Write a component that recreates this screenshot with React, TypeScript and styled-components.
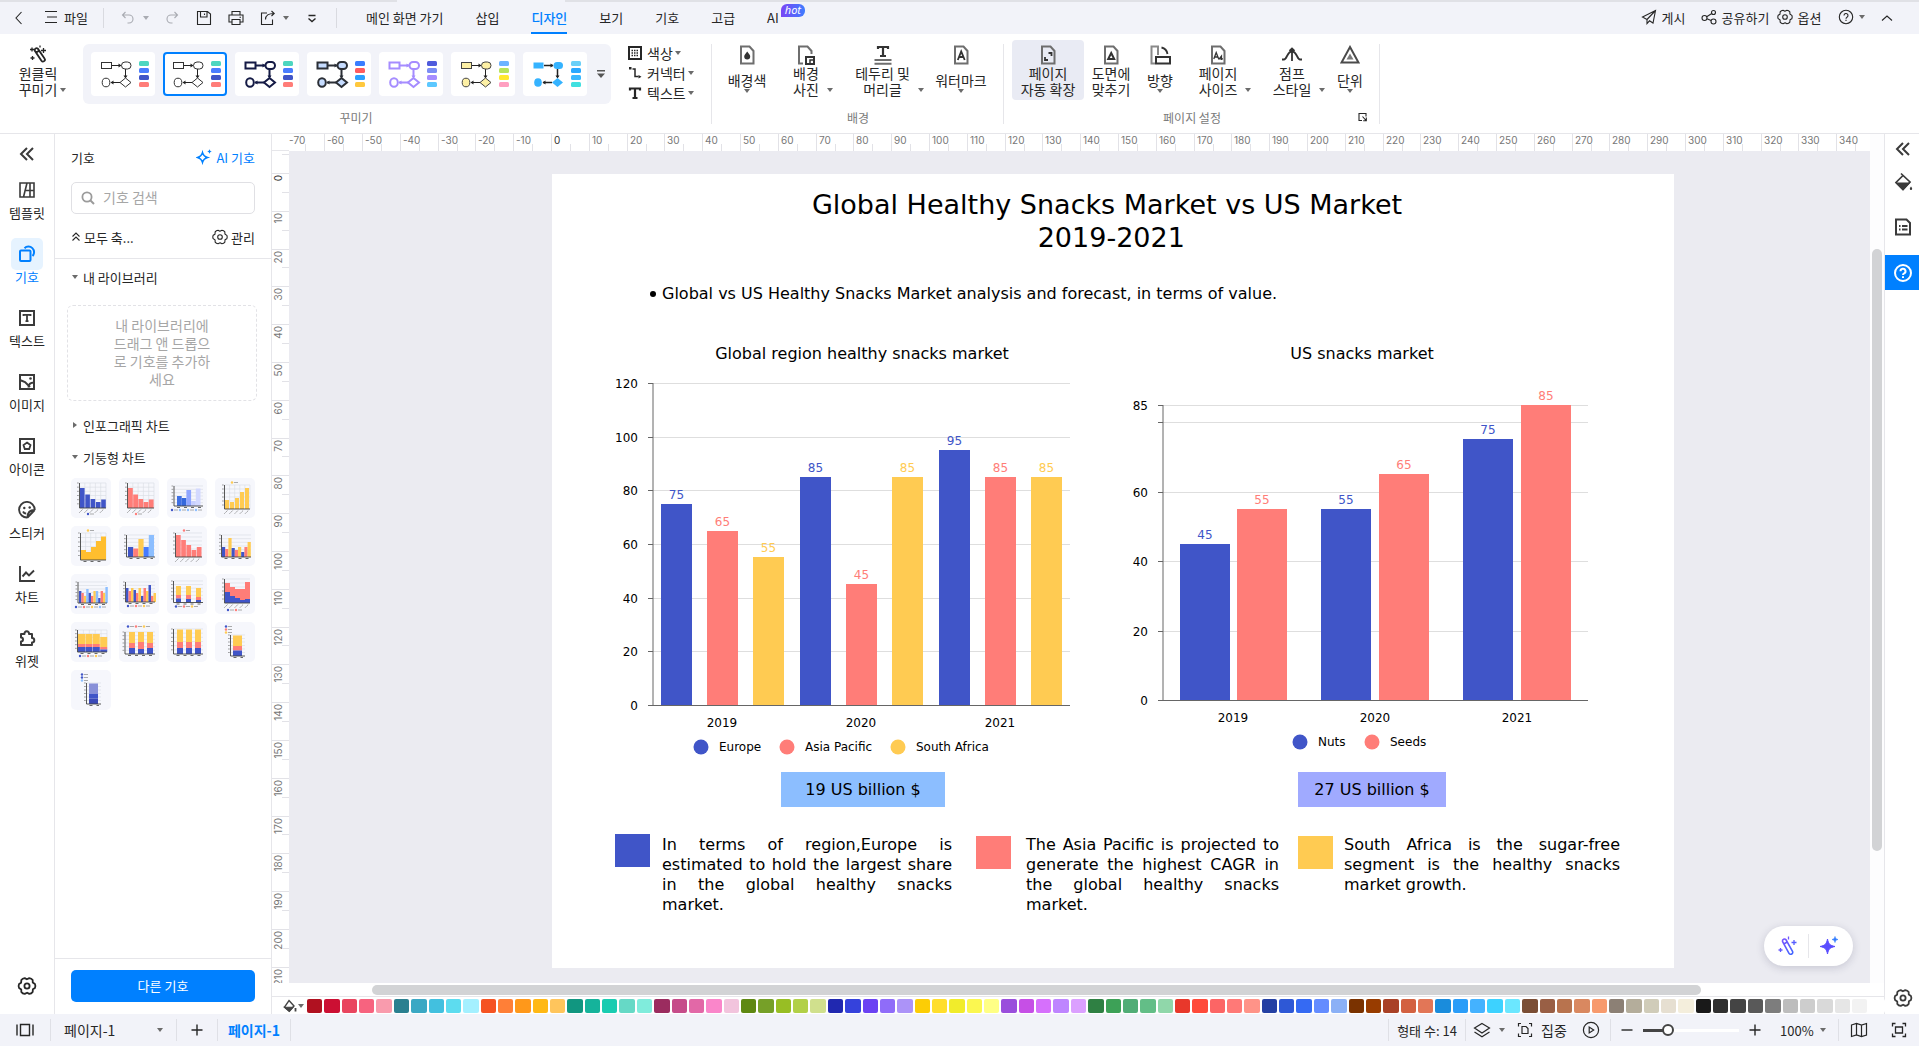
import React, { useEffect, useState } from "react";
import styled, { createGlobalStyle, css } from "styled-components";

const UI = `"Noto Sans CJK KR", "Noto Sans", sans-serif`;
const DOC = `Verdana, "DejaVu Sans", sans-serif`;
const BLUE = "#0080ff";
const LINE = "#e6e6ea";
const INK = "#262626";

const GlobalStyle = createGlobalStyle`
  *, *::before, *::after { box-sizing: border-box; }
  html, body { margin: 0; padding: 0; }
  body { font-family: ${UI}; font-size: 13px; color: ${INK}; background: #fff; overflow: hidden; }
  button, input, select { font: inherit; color: inherit; background: none; border: 0; padding: 0; margin: 0; }
  button { cursor: pointer; }
  svg { display: block; flex: none; }
  h1, h2, p, ul { margin: 0; padding: 0; font-weight: 400; }
`;

/* ---------- icons ---------- */

const gearPath = (cx: number, cy: number, r: number) => {
  const pts: string[] = [];
  for (let i = 0; i < 6; i++) {
    const a = (i * Math.PI) / 3 - Math.PI / 2;
    const mid = a + Math.PI / 6;
    const p = (ang: number, rad: number) =>
      `${(cx + rad * Math.cos(ang)).toFixed(2)} ${(cy + rad * Math.sin(ang)).toFixed(2)}`;
    pts.push(`${i ? "L" : "M"}${p(a - 0.02, r * 0.82)}`);
    pts.push(`L${p(mid - 0.24, r)}`);
    pts.push(`Q${p(mid, r * 1.08)} ${p(mid + 0.24, r)}`);
  }
  return pts.join("") + "Z";
};

const DocOutline = () => <path d="M2 1.5h8.5L14.5 6v12.5H2z" stroke="#6e6e6e" strokeWidth="2" />;

const glyphs: Record<string, [number, number, React.ReactNode]> = {
  back: [16, 16, <path d="M10.500 2 5 8l5.500 6" />],
  menu: [14, 14, <path d="M1 1.500h12M3 7h10M1 12.500h12" />],
  undo: [16, 16, <path d="M5.500 2 2.500 5l3 3M2.500 5H9a4 4 0 0 1 4 4v0a4 4 0 0 1-4 4H7.500" />],
  redo: [16, 16, <path d="M10.500 2l3 3-3 3M13.500 5H7a4 4 0 0 0-4 4v0a4 4 0 0 0 4 4h1.500" />],
  save: [16, 16, <path d="M1.500 1.500h10L14.500 4v10.500h-13zM4.500 1.500v5.500h6.500V1.500M8.500 3.500v1.500" />],
  print: [16, 16, <path d="M4 5V1.500h8V5M4 12H1V5h14v7h-3M4 9.500h8v5H4zM11.500 7.200h1.500" />],
  share: [16, 16, <path d="M7 3H1.500v11.500h11V9.500M5.500 9.500c0-4 3-6 8.500-6M11.500 1l2.700 2.500-2.700 2.500" />],
  custom: [12, 12, <path d="M2.500 3.500h7M2.500 6.500 6 9.500l3.500-3" strokeWidth="1.400" />],
  send: [16, 16, <path d="M14.500 1.500 1.500 8l4.500 2.500v4l2.500-2.700 3.500 2.200zM14.500 1.500 6 10.500" />],
  nodes: [16, 16, <><circle cx="3.500" cy="9" r="2.500" /><circle cx="12.500" cy="3.500" r="2" /><circle cx="12.500" cy="12.500" r="2.500" /><path d="M5.700 7.700 10.800 4.500M6 9.700l4 1.800" /></>],
  gear: [16, 16, <><path d={gearPath(8, 8, 7)} strokeLinejoin="round" /><circle cx="8" cy="8" r="2.300" /></>],
  gearBold: [20, 20, <><path d={gearPath(10, 10, 8.200)} strokeWidth="1.800" strokeLinejoin="round" /><circle cx="10" cy="10" r="2.600" strokeWidth="1.800" /></>],
  help: [16, 16, <><circle cx="8" cy="8" r="6.700" /><path d="M6 6.500a2 2 0 1 1 3 1.700c-.8.5-1 .8-1 1.500M8 10.800V12" /></>],
  helpBold: [20, 20, <><circle cx="10" cy="10" r="8" strokeWidth="2" /><path d="M7.500 8.200a2.500 2.500 0 1 1 3.700 2.200c-.9.5-1.200.9-1.200 1.600M10 13.200v1.800" strokeWidth="2" /></>],
  up: [14, 14, <path d="M2 9.500 7 5l5 4.500" />],
  collapse: [16, 16, <path d="M8 2 2 8l6 6M14 2 8 8l6 6" strokeWidth="2" />],
  wand: [20, 20, <><path d="M7.200 5.200a1.900 1.900 0 0 1 3.300-1.500l5.600 10.400a1.900 1.900 0 0 1-3.300 2zM8.200 7.500l2.800-1.500" strokeWidth="1.800" transform="rotate(-6 10 10)" /><path d="M4 2.500v4M2 4.500h4M15.500 3v5M13 5.500h5M4.500 11v4M2.500 13h4M12 .5v2" strokeWidth="1.300" /></>],
  colors: [14, 14, <><rect x="1" y="1" width="12" height="12" strokeWidth="2" /><path d="M3.500 4.500h7M3.500 7h7M3.500 9.500h7" strokeWidth="1.500" strokeDasharray="1.500 1" /></>],
  connector: [14, 14, <><path d="M4.500 3H7v7.500h3.500" strokeWidth="1.500" /><path d="M1 1h2.500v2.500H1zM10.500 9l3 1.700-3 1.800z" fill="currentColor" stroke="none" /></>],
  text: [14, 14, <path d="M2 4.500V2.500h10v2M7 2.500v9.500M4.500 12h5" strokeWidth="2.200" />],
  docDrop: [16, 20, <><DocOutline /><path d="M8.200 6.500c2 2.500 3 3.500 3 5a3 3 0 0 1-6 0c0-1.500 1-2.500 3-5z" fill="#333" stroke="none" /></>],
  docPhoto: [18, 20, <><path d="M6 18.500H2v-17h8.500L14.500 6v3" stroke="#6e6e6e" strokeWidth="2" /><path d="M9 12h8v7H9z" strokeWidth="2" stroke="#333" /><path d="M13 19v-4h4" stroke="#333" strokeWidth="1.500" /></>],
  header: [20, 20, <><path d="M5 4V2h10v2M10 2v9M7 11h6" stroke="#333" strokeWidth="2.200" /><path d="M1.500 15h17M1.500 18.800h17" stroke="#6e6e6e" strokeWidth="2" /></>],
  docA: [16, 20, <><DocOutline /><path d="M4.800 15 8.200 6.500 11.700 15M6 12h4.500" stroke="#333" strokeWidth="1.800" /></>],
  docExpand: [16, 20, <><DocOutline /><path d="M8.500 8h3v3M8 15H5v-3" stroke="#333" strokeWidth="1.800" /></>],
  docFit: [16, 20, <><DocOutline /><path d="M8.200 8 11.200 14H5.200z" stroke="#333" strokeWidth="2" /></>],
  rotate: [22, 20, <><path d="M6 18.500H2.500v-17H9V10" stroke="#8a8a8a" strokeWidth="2" /><path d="M7 12h14v6.500H7z" stroke="#333" strokeWidth="2" /><path d="M12.500 2.500c3.500.8 5.500 3 6 6.500" stroke="#333" strokeWidth="1.800" /></>],
  docA4: [16, 20, <><DocOutline /><path d="M3.800 14 6.200 7.500 8.700 14M4.700 12h3.200" stroke="#333" strokeWidth="1.300" /><path d="M11.500 15V11l-2.300 2.800H13" stroke="#333" strokeWidth="1.200" /></>],
  jump: [20, 20, <path d="M0 14.500h2c3 0 3-8 8-8s5 8 8 8h2M10 3v13M7.500 6 10 3.500 12.500 6" stroke="#333" strokeWidth="1.800" />],
  unit: [20, 20, <><path d="M10 2 18.500 17.500h-17z" stroke="#4a4a4a" strokeWidth="2" /><path d="M10 8.500l3.500 6h-7z" fill="#7a7a7a" stroke="none" /></>],
  launch: [10, 10, <path d="M4 8.500H1v-7h7v3M4.500 4.500 8 8.500M8.300 5.500v3.200H5.200" />],
  template: [18, 18, <path d="M2 2h14v14H2zM9 2 5.500 16M8 9.500h8M12 2v14" strokeWidth="1.600" />],
  symbol: [18, 18, <><rect x="2" y="5.500" width="10.500" height="10.500" rx="1" strokeWidth="2" /><path d="M6.500 3.300A5 5 0 1 1 14.500 11" strokeWidth="2" /></>],
  textBox: [18, 18, <><path d="M2 2h14v14H2z" strokeWidth="2" /><path d="M5.500 7V5.800h7V7M9 5.800V12M7.500 12.200h3" strokeWidth="1.800" /></>],
  image: [18, 18, <><path d="M2 2h14v14H2zM2 7l5 2 5 5M16 9.500c-4 0-5.500 2-5.500 5" strokeWidth="2" /><circle cx="12.500" cy="5.500" r="1.300" fill="currentColor" stroke="none" /></>],
  iconBox: [18, 18, <><path d="M2 2h14v14H2z" strokeWidth="2" /><path d="M9 5.500 12.500 8l-1.300 4H6.800L5.500 8z" strokeWidth="1.800" /></>],
  sticker: [18, 18, <><path d="M9.500 16.500A7.800 7.800 0 1 1 16.700 9M9.500 16.500c0-4 2-7.500 7.200-7.500M9.500 16.500 16.700 9M5 10.500c.7 1.300 1.700 2 3.200 2" strokeWidth="1.900" /><circle cx="6.300" cy="7" r="1.200" fill="currentColor" stroke="none" /><circle cx="11.700" cy="6.500" r="1.200" fill="currentColor" stroke="none" /></>],
  chart: [18, 18, <path d="M2 1v15h15M4.500 11.500 8 7.500l3 3 5-5" strokeWidth="1.900" />],
  puzzle: [18, 18, <path d="M3 5h3.500a2.300 2.300 0 1 1 4.500 0H14v4a2 2 0 1 1 0 4.500V16H3v-3.500a2 2 0 1 0 0-4z" strokeWidth="2" strokeLinejoin="round" />],
  sparkle: [16, 16, <><path d="M6.500 3.500c.8 3 2 4.200 5 5-3 .8-4.200 2-5 5-.8-3-2-4.200-5-5 3-.8 4.200-2 5-5z" strokeWidth="1.400" /><path d="M13.500 0c.3 1.600.9 2.200 2.500 2.500-1.600.3-2.200.9-2.500 2.500-.3-1.600-.9-2.200-2.500-2.500 1.600-.3 2.200-.9 2.500-2.500z" fill="currentColor" stroke="none" /></>],
  search: [14, 14, <><circle cx="6" cy="6" r="4.600" strokeWidth="1.800" /><path d="M9.500 9.500 13 13" strokeWidth="2" /></>],
  dblUp: [10, 12, <path d="M1.500 5.500 5 2l3.500 3.500M1.500 9.500 5 6l3.500 3.500" />],
  bucket: [20, 20, <><path d="M8 1.500 17 10 10 17.500 3 10.500 9.500 4" strokeWidth="1.700" /><path d="M2 10.500h15.500L10 18.500z" fill="currentColor" stroke="none" /><path d="M18 14.500c1 1.300 1.200 1.800 1.200 2.300a1.200 1.200 0 0 1-2.400 0c0-.5.300-1 1.200-2.300z" fill="currentColor" stroke="none" /></>],
  fillSmall: [14, 14, <><path d="M6 1.500 11 7l-4.700 5L1.500 8z" strokeWidth="1.400" /><path d="M1.500 8.300H10L6.300 12.500z" fill="currentColor" /><path d="M12.500 9v3.500" strokeWidth="1.800" /></>],
  list: [18, 18, <><path d="M2 1.500h10.500L16 5v11.500H2z" strokeWidth="2" /><path d="M5 8h1.500M8 8h5.500M5 11.500h1.500M8 11.500h5.500" strokeWidth="1.800" /></>],
  pages: [18, 14, <path d="M1 1.500v11M17 1.500v11M4.500 1.500h9v11h-9z" strokeWidth="1.400" />],
  plus: [14, 14, <path d="M7 1.500v11M1.500 7h11" strokeWidth="1.400" />],
  minus: [14, 14, <path d="M1.500 7h11" strokeWidth="1.400" />],
  layers: [18, 16, <path d="M9 1.500 16.500 6 9 11 1.500 6zM1.500 10 9 14.800 16.500 10" strokeWidth="1.200" />],
  focus: [16, 16, <path d="M4 1.500H1.500v3M12 1.500h2.500v3M4 14.500H1.500v-3M12 14.500h2.500v-3M5 4.500h4l2 2v5H5z" strokeWidth="1.200" />],
  play: [18, 18, <><circle cx="9" cy="9" r="7.600" strokeWidth="1.200" /><path d="M7.200 6v6l4.500-3z" strokeWidth="1.200" /></>],
  map: [18, 16, <path d="M1.500 3 6.500 1.500l5 1.500 5-1.500V13l-5 1.500-5-1.500-5 1.500zM6.500 1.500V13M11.500 3v11.500" strokeWidth="1.200" />],
  fit: [16, 16, <path d="M4.500 1.500h-3v3M11.500 1.500h3v3M4.500 14.500h-3v-3M11.500 14.500h3v-3M4.500 5h7v6h-7z" strokeWidth="1.300" />],
};

const Icon = ({ name }: { name: string }) => {
  const [w, h, body] = glyphs[name];
  return (
    <svg width={w} height={h} viewBox={`0 0 ${w} ${h}`} fill="none" stroke="currentColor" strokeWidth="1.1" aria-hidden="true">
      {body}
    </svg>
  );
};

const Caret = ({ dir = "down", color = "#6b6b6b" }: { dir?: "down" | "right"; color?: string }) => (
  <svg width="6" height="6" viewBox="0 0 6 6" fill={color} aria-hidden="true">
    <path d={dir === "down" ? "M0 1h6L3 5z" : "M1 0v6l4-3z"} />
  </svg>
);

/* ---------- frame ---------- */

const Frame = styled.div`
  height: 100vh;
  display: flex;
  flex-direction: column;
`;

const WindowEdge = styled.div`
  height: 2px;
  flex: none;
  background: linear-gradient(90deg, #e0e1e6 397px, #f2f3f9 397px, #f2f3f9 565px, #e0e1e6 565px);
`;

const MenuBar = styled.header`
  height: 32px;
  flex: none;
  display: flex;
  align-items: center;
  padding: 0 26px 0 7px;
  background: #f2f3f9;
`;

const IconButton = styled.button<{ $w?: number; $dim?: boolean }>`
  width: ${(p) => p.$w ?? 24}px;
  height: 24px;
  display: inline-flex;
  align-items: center;
  justify-content: center;
  color: ${(p) => (p.$dim ? "#a9abb2" : INK)};
`;

const LabelButton = styled.button<{ $w?: number }>`
  ${(p) => p.$w && css`width: ${p.$w}px;`}
  display: inline-flex;
  align-items: center;
  justify-content: center;
  gap: 5px;
  height: 24px;
  padding-bottom: 2px;
  white-space: nowrap;
`;

const FileButton = styled(LabelButton)`
  margin: 0 15px 0 13px;
  gap: 6px;
`;

const Separator = styled.span`
  width: 1px;
  height: 20px;
  background: #d9dae0;
`;

const QuickTools = styled.div`
  display: flex;
  gap: 8px;
  padding: 0 12px;
`;

const Split = styled.div`
  display: flex;
`;

const Tabs = styled.nav`
  display: flex;
  gap: 32px;
  padding-left: 29px;
  flex: 1;
`;

const Tab = styled.button<{ $active?: boolean }>`
  position: relative;
  height: 31px;
  padding-top: 1px;
  border-bottom: 2px solid ${(p) => (p.$active ? BLUE : "transparent")};
  color: ${(p) => (p.$active ? BLUE : INK)};
  font-weight: ${(p) => (p.$active ? 500 : 400)};
  white-space: nowrap;
`;

const HotBadge = styled.span`
  position: absolute;
  left: 100%;
  top: 1px;
  margin-left: 2px;
  padding: 0 4px;
  height: 13px;
  line-height: 12px;
  border-radius: 6px 6px 6px 0;
  background: linear-gradient(90deg, #7a45f5, #3f7dff);
  color: #fff;
  font-family: "Noto Sans", sans-serif;
  font-size: 11px;
  font-style: italic;
`;

/* ---------- ribbon ---------- */

const Ribbon = styled.section`
  height: 100px;
  flex: none;
  display: flex;
  border-bottom: 1px solid ${LINE};
  background: #fff;
`;

const Group = styled.div<{ $w: number; $pad: number }>`
  width: ${(p) => p.$w}px;
  padding: 6px 0 0 ${(p) => p.$pad}px;
  display: flex;
  flex-direction: column;
  background: linear-gradient(${LINE}, ${LINE}) right 0 top 10px / 1px 80px no-repeat;
`;

const GroupRow = styled.div`
  display: flex;
  height: 60px;
  flex: none;
`;

const GroupLabel = styled.div<{ $pull: number }>`
  display: flex;
  align-items: center;
  flex: none;
  height: 33px;
  padding-top: 1px;
  margin-left: -${(p) => p.$pull}px;
  font-size: 12px;
  color: #7a7a7a;
  & > span { flex: 1; text-align: center; }
`;

const Launcher = styled(IconButton)`
  width: 16px;
  margin: 0 9px 0 -25px;
`;

const Tool = styled.button<{ $w: number; $active?: boolean }>`
  width: ${(p) => p.$w}px;
  height: 60px;
  padding-top: 5px;
  display: flex;
  justify-content: center;
  align-items: flex-start;
  border-radius: 4px;
  font-size: 14px;
  line-height: 16px;
  white-space: nowrap;
  background: ${(p) => (p.$active ? "#e9ebf4" : "none")};
`;

const ToolBody = styled.span<{ $single?: boolean }>`
  display: flex;
  flex-direction: column;
  align-items: center;
  padding: 0 4px;
  & > svg:first-child { height: 20px; margin-bottom: ${(p) => (p.$single ? 7 : 0)}px; }
`;

const SideCaret = styled.span<{ $tight?: boolean }>`
  align-self: flex-start;
  padding-top: 42px;
  margin-left: ${(p) => (p.$tight ? -1 : 4)}px;
`;

const Gallery = styled.div`
  display: flex;
  align-items: center;
  height: 60px;
  margin: 4px 17px 0 9px;
  padding: 8px;
  gap: 8px;
  border-radius: 6px;
  background: #f2f3f9;
`;

const ThemeCard = styled.button<{ $selected?: boolean }>`
  width: 64px;
  height: 44px;
  border-radius: 4px;
  background: #fff;
  box-shadow: ${(p) => (p.$selected ? `inset 0 0 0 2px ${BLUE}` : "none")};
`;

const GalleryMore = styled(IconButton)`
  width: 16px;
  margin: 0 -6px 0 -2px;
`;

const OptionList = styled.div`
  display: flex;
  flex-direction: column;
  padding-top: 3px;
`;

const OptionButton = styled.button`
  display: flex;
  align-items: center;
  gap: 5px;
  height: 20px;
  font-size: 14px;
  line-height: 20px;
  white-space: nowrap;
  & > svg:last-child { margin-left: -3px; }
`;

interface Theme { stroke: string; fill: string; sw: number; line: string; colors: string[] }
const base = ["#4dd6c0", "#4a7dff", "#4055c8", "#ff7d78"];
const themes: Theme[] = [
  { stroke: "#333", fill: "#fff", sw: 1, line: "#222", colors: base },
  { stroke: "#333", fill: "#fff", sw: 1, line: "#222", colors: base },
  { stroke: "#141a45", fill: "#fff", sw: 2, line: "#141a45", colors: base },
  { stroke: "#2b2f36", fill: "#c6dcff", sw: 2, line: "#2b2f36", colors: ["#3a7dff", "#ff5c60", "#2ba0ff", "#ffc83d"] },
  { stroke: "#a58cff", fill: "#fff", sw: 2, line: "#a58cff", colors: ["#4f5bdc", "#7b8df5", "#a58cff", "#5cc8ff"] },
  { stroke: "#444", fill: "#fdf0a5", sw: 1, line: "#222", colors: ["#6db3ff", "#b8e35c", "#ffe830", "#ff9fc0"] },
  { stroke: "#35b3ff", fill: "#35b3ff", sw: 0, line: "#222", colors: ["#6bd0f8", "#2ba8ff", "#3cb8ff", "#40e0e0"] },
];

const ThemePreview = ({ t }: { t: Theme }) => (
  <svg width="64" height="44" viewBox="0 0 64 44" aria-hidden="true">
    <g stroke={t.line} strokeWidth={t.sw || 1.500} fill={t.line}>
      <path d="M21 13.500h9M34.500 17v8M29 30.500h-9" fill="none" />
      <path d="M27.500 11.500v4l3-2zM32.500 23.500h4l-2 3zM22.500 28.500v4l-3-2z" stroke="none" />
    </g>
    <g stroke={t.stroke} strokeWidth={t.sw} fill={t.fill}>
      <rect x="10.500" y="10.500" width="10" height="6" />
      <rect x="30.500" y="10" width="9.500" height="7" rx="3.500" />
      <path d="M34.500 26l5.500 4.500-5.500 4.500-5.500-4.500z" />
      <ellipse cx="15" cy="30.500" rx="3.800" ry="4.300" />
    </g>
    {t.colors.map((c, i) => (
      <rect key={i} x="48" y={9 + i * 7} width="10" height="5" rx="1.500" fill={c} />
    ))}
  </svg>
);

interface ToolSpec { icon: string; lines: string[]; w: number; caret?: "side" | "below"; active?: boolean }
const backgroundTools: ToolSpec[] = [
  { icon: "docDrop", lines: ["배경색"], w: 60, caret: "below" },
  { icon: "docPhoto", lines: ["배경", "사진"], w: 68, caret: "side" },
  { icon: "header", lines: ["테두리 및", "머리글"], w: 85, caret: "side" },
  { icon: "docA", lines: ["워터마크"], w: 62, caret: "below" },
];
const pageTools: ToolSpec[] = [
  { icon: "docExpand", lines: ["페이지", "자동 확장"], w: 72, active: true },
  { icon: "docFit", lines: ["도면에", "맞추기"], w: 54 },
  { icon: "rotate", lines: ["방향"], w: 44, caret: "below" },
  { icon: "docA4", lines: ["페이지", "사이즈"], w: 82, caret: "side" },
  { icon: "jump", lines: ["점프", "스타일"], w: 66, caret: "side" },
  { icon: "unit", lines: ["단위"], w: 40, caret: "below" },
];

const ToolButton = ({ spec, tight }: { spec: ToolSpec; tight?: boolean }) => (
  <Tool $w={spec.w} $active={spec.active}>
    <ToolBody $single={spec.lines.length === 1}>
      <Icon name={spec.icon} />
      {spec.lines.map((l) => <span key={l}>{l}</span>)}
      {spec.caret === "below" && <Caret />}
    </ToolBody>
    {spec.caret === "side" && <SideCaret $tight={tight}><Caret /></SideCaret>}
  </Tool>
);

/* ---------- left rail and panel ---------- */

const Body = styled.div`
  flex: 1;
  min-height: 0;
  display: flex;
`;

const Rail = styled.nav`
  width: 55px;
  flex: none;
  display: flex;
  flex-direction: column;
  align-items: center;
  padding: 8px 0 16px;
  border-right: 1px solid ${LINE};
  color: #3b3b3b;
  & > button:last-child { margin-top: auto; }
`;

const RailItem = styled.button<{ $active?: boolean }>`
  height: 64px;
  display: flex;
  flex-direction: column;
  align-items: center;
  line-height: 14px;
  color: ${(p) => (p.$active ? BLUE : INK)};
  & > span:first-child {
    width: 32px;
    height: 32px;
    display: grid;
    place-items: center;
    border-radius: 5px;
    color: ${(p) => (p.$active ? BLUE : "#3b3b3b")};
    background: ${(p) => (p.$active ? "#e6f3ff" : "none")};
  }
`;

const RailToggle = styled(IconButton)`
  margin-bottom: 8px;
  color: #3b3b3b;
`;

const Panel = styled.aside`
  width: 216px;
  flex: none;
  display: flex;
  flex-direction: column;
`;

const PanelHead = styled.div`
  padding: 13px 16px 10px;
  border-bottom: 1px solid ${LINE};
`;

const PanelRow = styled.div`
  display: flex;
  justify-content: space-between;
  align-items: center;
  height: 20px;
`;

const AiLink = styled.button`
  display: flex;
  align-items: center;
  gap: 4px;
  color: ${BLUE};
`;

const SearchBox = styled.label`
  display: flex;
  align-items: center;
  gap: 8px;
  height: 32px;
  margin: 15px 0 14px;
  padding: 0 9px;
  border: 1px solid #e0e0e4;
  border-radius: 5px;
  color: #9b9b9b;
`;

const SearchInput = styled.input`
  flex: 1;
  min-width: 0;
  height: 28px;
  padding-bottom: 2px;
  font-size: 14px;
  outline: none;
  &::placeholder { color: #a6a6a6; opacity: 1; }
`;

const RowButton = styled.button`
  display: flex;
  align-items: center;
  gap: 3px;
  padding-bottom: 2px;
`;

const PanelBody = styled.div`
  flex: 1;
  min-height: 0;
  padding: 2px 14px 0 12px;
  display: flex;
  flex-direction: column;
`;

const SectionToggle = styled.button`
  display: flex;
  align-items: center;
  gap: 5px;
  height: 32px;
  padding: 0 5px;
  text-align: left;
`;

const DropZone = styled.p`
  margin: 12px 0 8px;
  height: 96px;
  display: flex;
  align-items: center;
  border: 1px dashed #e2e2e6;
  border-radius: 6px;
  padding: 0 44px 2px;
  font-size: 14px;
  line-height: 18px;
  color: #a6a6a6;
  text-align: center;
  word-break: break-all;
`;

const TileGrid = styled.div`
  display: grid;
  grid-template-columns: repeat(4, 40px);
  gap: 8px;
  padding: 5px 4px;
`;

const Tile = styled.button`
  height: 40px;
  border-radius: 5px;
  background: #f6f7fc;
`;

const PanelFoot = styled.div`
  padding: 11px 16px 12px;
  border-top: 1px solid ${LINE};
`;

const PrimaryButton = styled.button`
  width: 100%;
  height: 32px;
  padding-bottom: 2px;
  border-radius: 5px;
  background: ${BLUE};
  color: #fff;
`;

const B = "#4055c8", R = "#ff7d78", Y = "#ffcb52", L = "#8cbeff";
/* Each bar: left edge, width, then [top, colour] pairs stacked downwards. */
type Bar = [number, number, ...[number, string][]];
interface Mini { x: number; top: number; bottom: number; right: number; bars: Bar[]; grid?: boolean; legend?: "top" | "bottom" | "stack"; slant?: boolean; keys: string[] }

const run = (x: number, w: number, gap: number, tops: number[], colors: string[]): Bar[] =>
  tops.map((t, i) => [x + i * (w + gap), w, [t, colors[i % colors.length]]] as Bar);
const stacks = (x: number, w: number, gap: number, rows: [number, string][][]): Bar[] =>
  rows.map((r, i) => [x + i * (w + gap), w, ...r] as Bar);

const minis: Mini[] = [
  { x: 8.500, top: 5, bottom: 30, right: 35, grid: true, slant: true, legend: "bottom", keys: [B], bars: run(9, 4.600, 0.700, [10, 16.500, 21, 24, 21.500], [B]) },
  { x: 8.500, top: 5, bottom: 30, right: 35, grid: true, slant: true, legend: "bottom", keys: [R], bars: run(9, 4.800, 0.400, [10, 16.500, 21, 24, 21.500], [R]) },
  { x: 7, top: 8, bottom: 28, right: 36, legend: "bottom", keys: [B, L, L, L], bars: run(10, 4.700, 0, [18, 20, 12, 23, 10.500], ["#3f70e4", "#3568dc", "#8fa5ff", "#c8d0ff", "#d3d9ff"]) },
  { x: 9.500, top: 7, bottom: 31, right: 35, grid: true, slant: true, legend: "top", keys: [Y], bars: run(10, 4, 1, [22, 24, 20, 14, 10], [Y]) },
  { x: 9.500, top: 7, bottom: 34, right: 35, grid: true, legend: "top", keys: [Y], bars: run(10, 5, 0, [24, 26, 21, 15, 10.500], ["#ffbe2e"]) },
  { x: 7.500, top: 9, bottom: 31, right: 36, keys: [], bars: run(9, 5.200, 0, [21, 22.500, 13, 21, 9], [B, R, Y, "#457bff", L]) },
  { x: 8.500, top: 7, bottom: 31, right: 35, slant: true, legend: "top", keys: [R], bars: run(9, 4.700, 0.500, [9, 14, 19, 24, 21], [R]) },
  { x: 6.500, top: 9, bottom: 31, right: 36, keys: [], bars: run(7, 3.200, 0, [21, 23, 12, 22, 24, 21, 26, 21, 16], [B, R, Y]) },
  { x: 7, top: 8, bottom: 29, right: 36, legend: "bottom", keys: [B, R, Y, L], bars: run(8, 2.400, 0, [17, 19, 22, 15, 19, 22, 17, 17, 24, 17, 19, 13], [B, R, Y, L]) },
  { x: 6.500, top: 8, bottom: 28, right: 36, legend: "bottom", keys: [B, R, Y], bars: run(7, 2.500, 0, [14, 17, 14, 16, 19, 14, 22, 14, 17, 11, 22, 19], [B, R, Y]) },
  { x: 6.500, top: 7, bottom: 28.500, right: 36, legend: "bottom", keys: [B, R, Y], bars: stacks(9, 5, 5, [[[12, Y], [21, R], [24.500, B]], [[12, Y], [21, R], [25, B]], [[14, Y], [23, R], [26, B]]]) },
  { x: 9.500, top: 5, bottom: 29, right: 35, slant: true, legend: "bottom", keys: [B, R], bars: stacks(10, 5, 0, [[[9, R], [18, B]], [[13, R], [22, B]], [[15, R], [24, B]], [[15, R], [26, B]], [[8, R], [25, B]]]) },
  { x: 6.500, top: 8, bottom: 30, right: 36, grid: true, legend: "bottom", keys: [B, R, Y], bars: stacks(7, 7, 0.400, [[[12, Y], [22, R], [25, B]], [[12, Y], [22, R], [25, B]], [[12, Y], [22, R], [25, B]], [[15, Y], [25, R], [27.500, B]]]) },
  { x: 6, top: 10, bottom: 32, right: 36, legend: "top", keys: [B, R, Y], bars: stacks(10, 6, 3, [[[10, Y], [21, R], [26, B]], [[10, Y], [20, R], [27, B]], [[10, Y], [21, R], [26, B]]]) },
  { x: 6.500, top: 7, bottom: 32, right: 36, keys: [], bars: stacks(10, 6, 3, [[[7.500, Y], [20, R], [26, B]], [[7.500, Y], [20, R], [26, B]], [[7.500, Y], [20, R], [26, B]]]) },
  { x: 15.500, top: 13, bottom: 34, right: 30, legend: "stack", keys: [B, R, Y], bars: stacks(18, 9, 0, [[[13.500, Y], [24, R], [28.500, B]]]) },
  { x: 15.500, top: 13, bottom: 34, right: 30, legend: "stack", keys: [B, B, L], bars: stacks(18, 9, 0, [[[13.500, "#8890d8"], [24, B], [28.500, "#3a49b8"]]]) },
];

const MiniChart = ({ m }: { m: Mini }) => {
  const step = (m.bottom - m.top) / 6;
  const keyY = (i: number) => {
    if (m.legend === "stack") return 4.500 + i * 3;
    if (m.legend === "top") return 4.500;
    return m.slant ? 36 : m.bottom + 4;
  };
  return (
    <svg width="40" height="40" viewBox="0 0 40 40" aria-hidden="true">
      {[0, 1, 2, 3, 4, 5].map((i) => (
        <g key={i}>
          <path d={`M${m.x} ${m.top + i * step}H${m.right}`} stroke="#d9dbe2" strokeWidth="0.6" />
          <path d={`M${m.x - 2.500} ${m.top + i * step}h1.800`} stroke="#666" strokeWidth="0.6" />
        </g>
      ))}
      {m.grid && [1, 2, 3, 4, 5].map((i) => (
        <path key={i} d={`M${m.x + (i * (m.right - m.x)) / 5} ${m.top}V${m.bottom}`} stroke="#d9dbe2" strokeWidth="0.6" />
      ))}
      {m.bars.map(([x, w, ...segs], i) =>
        segs.map(([t, c], j) => (
          <rect key={`${i}-${j}`} x={x} y={t} width={w} height={(segs[j + 1]?.[0] ?? m.bottom) - t} fill={c} />
        ))
      )}
      <path d={`M${m.x} ${m.top}V${m.bottom}H${m.right}`} fill="none" stroke="#444" strokeWidth="0.9" />
      {m.slant
        ? [0, 1, 2, 3, 4].map((i) => <path key={i} d={`M${m.x + 3 + i * 5.200} ${m.bottom + 1.500}l-3.500 3.500`} stroke="#777" strokeWidth="0.7" strokeDasharray="2 .6" />)
        : <path d={`M${m.x + 3} ${m.bottom + 1.500}H${m.right - 2}`} stroke="#444" strokeWidth="0.8" strokeDasharray="3 4" />}
      {m.keys.map((c, i) => {
        const x = m.legend === "stack" ? 10 : 20 - m.keys.length * 4 + i * 8;
        return (
          <g key={i}>
            <circle cx={x + 1} cy={keyY(i)} r="1.200" fill={c} />
            <path d={`M${x + 3} ${keyY(i)}h4`} stroke="#888" strokeWidth="0.7" />
          </g>
        );
      })}
    </svg>
  );
};

/* ---------- workspace ---------- */

const Workspace = styled.main`
  flex: 1;
  min-width: 0;
  display: grid;
  grid-template-columns: 17px minmax(0, 1fr) 14px;
  grid-template-rows: 17px minmax(0, 1fr) 14px 17px;
  border-left: 1px solid ${LINE};
  position: relative;
`;

const Corner = styled.div`
  border-bottom: 1px solid ${LINE};
`;

const RulerBox = styled.div`
  overflow: hidden;
  & text { font-family: Inter, sans-serif; font-size: 10px; fill: #777; }
  & text.origin { fill: #333; }
`;

const MM = 3.78;
const RULER_ORIGIN_X = 263;
const RULER_ORIGIN_Y = 22;

/* Space the window leaves for the drawing area, used to end the rulers in time. */
const useArea = () => {
  const read = () => ({ w: window.innerWidth - 338, h: window.innerHeight - 214 });
  const [area, setArea] = useState(read);
  useEffect(() => {
    const update = () => setArea(read());
    window.addEventListener("resize", update);
    return () => window.removeEventListener("resize", update);
  }, []);
  return area;
};

const HorizontalRuler = () => {
  const { w } = useArea();
  const last = Math.floor((w - RULER_ORIGIN_X - 22) / MM / 10);
  return (
    <RulerBox>
      <svg width="100%" height="17">
        {Array.from({ length: Math.max(0, last + 8) }, (_, i) => (i - 7) * 10).map((v) => {
          const x = Math.round(RULER_ORIGIN_X + v * MM);
          return (
            <g key={v}>
              <path d={`M${x - 0.500} 0V17M${x + 18.500} 10V17`} stroke="#e2e2e7" />
              <text x={x + 2} y="10" className={v === 0 ? "origin" : undefined}>{v}</text>
            </g>
          );
        })}
      </svg>
    </RulerBox>
  );
};

const VerticalRuler = () => {
  const { h } = useArea();
  const last = Math.floor((h - RULER_ORIGIN_Y) / MM / 10);
  return (
    <RulerBox>
      <svg width="17" height="100%">
        {Array.from({ length: Math.max(0, last + 1) }, (_, i) => i * 10).map((v) => {
          const y = Math.round(RULER_ORIGIN_Y + v * MM);
          return (
            <g key={v}>
              <path d={`M0 ${y + 0.500}H17M10 ${y - 18.500}H17`} stroke="#e2e2e7" />
              <text transform={`translate(10 ${y + 2}) rotate(-90)`} textAnchor="end" className={v === 0 ? "origin" : undefined}>{v}</text>
            </g>
          );
        })}
      </svg>
    </RulerBox>
  );
};

const VerticalScroll = styled.div`
  grid-column: 3;
  grid-row: 1 / 3;
  background: #fdfdfe;
  padding: 115px 2px 0;
  &::before { content: ""; display: block; width: 10px; height: 602px; border-radius: 5px; background: #d2d3d5; }
`;

const HorizontalScroll = styled.div`
  grid-column: 1 / 4;
  padding: 2px 183px 0 100px;
  border-bottom: 1px solid ${LINE};
  &::before { content: ""; display: block; height: 10px; border-radius: 5px; background: #d2d3d5; }
`;

const Viewport = styled.div`
  overflow: hidden;
  background: #ebebf1;
  padding: 23px 0 0 263px;
`;

const Paper = styled.article`
  position: relative;
  width: 1122px;
  height: 794px;
  background: #fff;
  color: #000;
  font-family: ${DOC};
  font-size: 16px;
  line-height: 20px;
`;

/* Shapes sit freely on the drawing sheet, in sheet coordinates. */
const Shape = styled.div<{ $x: number; $y: number; $w?: number; $h?: number }>`
  position: absolute;
  left: ${(p) => p.$x}px;
  top: ${(p) => p.$y}px;
  ${(p) => p.$w && css`width: ${p.$w}px;`}
  ${(p) => p.$h && css`height: ${p.$h}px;`}
`;

const SheetTitle = styled(Shape).attrs({ as: "h1" })`
  font-size: 27px;
  line-height: 33px;
  text-align: center;
  white-space: pre-line;
`;

const ChartTitle = styled(Shape).attrs({ as: "h2" })`
  font-size: 16px;
  text-align: center;
  white-space: nowrap;
`;

const Bullet = styled(Shape)`
  display: flex;
  align-items: center;
  gap: 6px;
  white-space: nowrap;
  &::before { content: ""; width: 6px; height: 6px; border-radius: 50%; background: #000; }
`;

const Total = styled(Shape)<{ $bg: string }>`
  display: grid;
  place-items: center;
  background: ${(p) => p.$bg};
  white-space: nowrap;
`;

const Swatch = styled(Shape)<{ $bg: string }>`
  background: ${(p) => p.$bg};
`;

const Note = styled(Shape)`
  text-align: justify;
`;

const ChartBox = styled(Shape)`
  & text { font-family: ${DOC}; font-size: 12px; fill: #000; }
`;

interface ChartSpec {
  width: number; height: number; axisX: number; right: number; zeroY: number; unit: number;
  ticks: [number, boolean][]; bars: [number, number, string][]; barW: number;
  cats: [number, string][]; legend: [number, string, string][]; legendY: number; label: string;
}

const BarChart = ({ s }: { s: ChartSpec }) => (
  <svg width={s.width} height={s.height} role="img" aria-label={s.label}>
    {s.ticks.map(([v, labelled]) => {
      const y = Math.round(s.zeroY - v * s.unit) + 0.500;
      return (
        <g key={v}>
          {v > 0 && <path d={`M${s.axisX} ${y}H${s.right}`} stroke="#dedede" />}
          <path d={`M${s.axisX - 5} ${y}h5`} stroke="#666" />
          {labelled && <text x={s.axisX - 15} y={y + 4} textAnchor="end">{v}</text>}
        </g>
      );
    })}
    {s.bars.map(([x, v, c], i) => {
      const y = Math.round(s.zeroY - v * s.unit);
      return (
        <g key={i}>
          <rect x={x} y={y} width={s.barW} height={s.zeroY - y} fill={c} />
          <text x={x + s.barW / 2} y={y - 5} textAnchor="middle" style={{ fill: c }}>{v}</text>
        </g>
      );
    })}
    <path d={`M${s.axisX} ${Math.round(s.zeroY - s.ticks[s.ticks.length - 1][0] * s.unit)}V${s.zeroY + 0.500}H${s.right}`} fill="none" stroke="#666" />
    {s.cats.map(([x, t]) => <text key={t} x={x} y={s.zeroY + 22} textAnchor="middle">{t}</text>)}
    {s.legend.map(([x, c, t]) => (
      <g key={t}>
        <circle cx={x} cy={s.legendY} r="7.500" fill={c} />
        <text x={x + 18} y={s.legendY + 4}>{t}</text>
      </g>
    ))}
  </svg>
);

const globalChart: ChartSpec = {
  label: "Global region healthy snacks market", width: 480, height: 400,
  axisX: 53, right: 470, zeroY: 335, unit: 2.6833,
  ticks: [[0, true], [20, true], [40, true], [60, true], [80, true], [100, true], [120, true]],
  barW: 31,
  bars: [[61, 75, B], [107, 65, R], [153, 55, Y], [200, 85, B], [246, 45, R], [292, 85, Y], [339, 95, B], [385, 85, R], [431, 85, Y]],
  cats: [[122, "2019"], [261, "2020"], [400, "2021"]],
  legend: [[101, B, "Europe"], [187, R, "Asia Pacific"], [298, Y, "South Africa"]], legendY: 377,
};

const usChart: ChartSpec = {
  label: "US snacks market", width: 500, height: 400,
  axisX: 63, right: 488, zeroY: 330, unit: 3.475,
  ticks: [[0, true], [20, true], [40, true], [60, true], [80, false], [85, true]],
  barW: 50,
  bars: [[80, 45, B], [137, 55, R], [221, 55, B], [279, 65, R], [363, 75, B], [421, 85, R]],
  cats: [[133, "2019"], [275, "2020"], [417, "2021"]],
  legend: [[200, B, "Nuts"], [272, R, "Seeds"]], legendY: 372,
};

const AssistPill = styled.div`
  position: absolute;
  right: 31px;
  bottom: 48px;
  display: flex;
  align-items: center;
  justify-content: center;
  gap: 8px;
  width: 89px;
  height: 40px;
  border-radius: 20px;
  background: #fff;
  box-shadow: 0 2px 8px rgba(40, 40, 80, 0.18);
  & > span { width: 1px; height: 24px; background: ${LINE}; }
`;

const PaletteBar = styled.div`
  grid-column: 1 / 4;
  display: flex;
  align-items: center;
  padding-left: 11px;
`;

const FillButton = styled.button`
  width: 24px;
  display: flex;
  align-items: center;
  gap: 1px;
  color: #444;
`;

const Swatches = styled.div`
  flex: 1;
  display: flex;
  gap: 2px;
`;

const ColorChip = styled.button<{ $c: string }>`
  flex: 1;
  height: 14px;
  border-radius: 2px;
  background: ${(p) => p.$c};
`;

const paletteColors = (
  "b01120 cc0f33 e9455f f7637f f99bad 2a8090 3ba8c4 42c0df 5ddcef a4f0ff f55323 ff7f37 ff981a ffb815 ffc55c " +
  "119680 15b39b 19ccb1 66d9c6 80ecdc 9b2c5f c64c8a e268a7 fa86ca f2c4dd 5f8812 76a028 98be24 b2d048 d0e08d " +
  "2028b0 3542dc 6b42f3 8f6cf9 ac93f8 fccd05 ffde2d f1ec2b fbf750 ffff85 9a4edc c64fe6 d670fc be85ff dba0ff " +
  "2f8043 3da157 51ad76 63be87 90d7aa e8382b ff4a3a fc6565 ff7977 ff9388 2440a3 2e58d6 356af3 648cff 8bb0f6 " +
  "7a3200 983c00 a94127 d36141 e27657 1a8cdc 2b9df8 44b2ff 3dd2ff 6be7ff 7b4e35 995f45 b8734e d98860 f79a6d " +
  "8c8075 b4ad9b d0ccb9 e6dfd1 f4eedc 191919 303030 444444 595959 7d7d7d bdbdbd cdcdcd d9d9d9 e6e6e6 f2f2f2 ffffff"
).split(" ").map((c) => `#${c}`);

/* ---------- right rail ---------- */

const RightRail = styled.nav`
  width: 35px;
  flex: none;
  display: flex;
  flex-direction: column;
  align-items: center;
  padding-top: 4px;
  border-left: 1px solid ${LINE};
`;

const RightItem = styled.button<{ $h: number; $active?: boolean }>`
  width: 34px;
  height: ${(p) => p.$h}px;
  display: grid;
  place-items: center;
  padding-left: 2px;
  margin-top: ${(p) => (p.$active ? 5 : 0)}px;
  color: ${(p) => (p.$active ? "#fff" : "#3b3b3b")};
  background: ${(p) => (p.$active ? BLUE : "none")};
  &:last-child { margin-top: auto; }
`;

/* ---------- status bar ---------- */

const StatusBar = styled.footer`
  height: 32px;
  flex: none;
  display: flex;
  align-items: center;
  background: #f2f3f9;
`;

const StatusSep = styled.span`
  width: 1px;
  height: 22px;
  background: #dfe0e6;
`;

const StatusButton = styled.button<{ $w: number; $accent?: boolean }>`
  width: ${(p) => p.$w}px;
  height: 24px;
  display: flex;
  align-items: center;
  justify-content: center;
  gap: 8px;
  font-size: 14px;
  white-space: nowrap;
  color: ${(p) => (p.$accent ? BLUE : INK)};
  font-weight: ${(p) => (p.$accent ? 700 : 400)};
`;

const StatusText = styled.span`
  width: 76px;
  text-align: center;
  font-size: 13px;
  white-space: nowrap;
`;

const SelectWrap = styled.label<{ $w: number; $l: number; $r: number }>`
  width: ${(p) => p.$w}px;
  display: flex;
  align-items: center;
  padding: 0 ${(p) => p.$r}px 0 ${(p) => p.$l}px;
  & > select { flex: 1; min-width: 0; appearance: none; outline: none; }
`;

const PageSelect = styled.select`
  font-size: 14px;
`;

const Spacer = styled.span`
  flex: 1;
`;

const ZoomSlider = styled.input`
  appearance: none;
  width: 96px;
  height: 14px;
  background: linear-gradient(90deg, #444 24px, #fff 24px) center / 100% 3px no-repeat;
  &::-webkit-slider-thumb {
    appearance: none;
    width: 12px;
    height: 12px;
    border: 2px solid #444;
    border-radius: 50%;
    background: #fff;
  }
`;

const railItems: [string, string][] = [
  ["template", "템플릿"], ["symbol", "기호"], ["textBox", "텍스트"], ["image", "이미지"],
  ["iconBox", "아이콘"], ["sticker", "스티커"], ["chart", "차트"], ["puzzle", "위젯"],
];

export default function App() {
  return (
    <Frame>
      <GlobalStyle />
      <WindowEdge />
      <MenuBar>
        <IconButton aria-label="뒤로"><Icon name="back" /></IconButton>
        <FileButton><Icon name="menu" />파일</FileButton>
        <Separator />
        <QuickTools>
          <Split>
            <IconButton $dim aria-label="실행 취소"><Icon name="undo" /></IconButton>
            <IconButton $w={12} aria-label="실행 취소 목록"><Caret color="#a9abb2" /></IconButton>
          </Split>
          <IconButton $dim aria-label="다시 실행"><Icon name="redo" /></IconButton>
          <IconButton aria-label="저장"><Icon name="save" /></IconButton>
          <IconButton aria-label="인쇄"><Icon name="print" /></IconButton>
          <Split>
            <IconButton aria-label="내보내기"><Icon name="share" /></IconButton>
            <IconButton $w={12} aria-label="내보내기 목록"><Caret /></IconButton>
          </Split>
          <IconButton aria-label="사용자 지정"><Icon name="custom" /></IconButton>
        </QuickTools>
        <Separator />
        <Tabs>
          <Tab>메인 화면 가기</Tab>
          <Tab>삽입</Tab>
          <Tab $active>디자인</Tab>
          <Tab>보기</Tab>
          <Tab>기호</Tab>
          <Tab>고급</Tab>
          <Tab>AI<HotBadge>hot</HotBadge></Tab>
        </Tabs>
        <LabelButton $w={60}><Icon name="send" />게시</LabelButton>
        <LabelButton $w={84}><Icon name="nodes" />공유하기</LabelButton>
        <LabelButton $w={44}><Icon name="gear" />옵션</LabelButton>
        <LabelButton $w={60} aria-label="도움말"><Icon name="help" /><Caret /></LabelButton>
        <IconButton $w={12} aria-label="리본 접기"><Icon name="up" /></IconButton>
      </MenuBar>

      <Ribbon>
        <Group $w={712} $pad={7}>
          <GroupRow>
            <ToolButton spec={{ icon: "wand", lines: ["원클릭", "꾸미기"], w: 67, caret: "side" }} tight />
            <Gallery>
              {themes.map((t, i) => (
                <ThemeCard key={i} $selected={i === 1} aria-label={`테마 ${i + 1}`}><ThemePreview t={t} /></ThemeCard>
              ))}
              <GalleryMore aria-label="테마 더 보기">
                <svg width="8" height="8" viewBox="0 0 8 8" fill="#555"><path d="M0 0h8v1.500H0zM0 3.500h8L4 8z" /></svg>
              </GalleryMore>
            </Gallery>
            <OptionList>
              <OptionButton><Icon name="colors" />색상 <Caret /></OptionButton>
              <OptionButton><Icon name="connector" />커넥터 <Caret /></OptionButton>
              <OptionButton><Icon name="text" />텍스트 <Caret /></OptionButton>
            </OptionList>
          </GroupRow>
          <GroupLabel $pull={7}><span>꾸미기</span></GroupLabel>
        </Group>
        <Group $w={292} $pad={5}>
          <GroupRow>{backgroundTools.map((t) => <ToolButton key={t.icon} spec={t} />)}</GroupRow>
          <GroupLabel $pull={5}><span>배경</span></GroupLabel>
        </Group>
        <Group $w={376} $pad={8}>
          <GroupRow>{pageTools.map((t) => <ToolButton key={t.icon} spec={t} />)}</GroupRow>
          <GroupLabel $pull={8}>
            <span>페이지 설정</span>
            <Launcher aria-label="페이지 설정 열기"><Icon name="launch" /></Launcher>
          </GroupLabel>
        </Group>
      </Ribbon>

      <Body>
        <Rail>
          <RailToggle aria-label="패널 접기"><Icon name="collapse" /></RailToggle>
          {railItems.map(([icon, label]) => (
            <RailItem key={icon} $active={icon === "symbol"}>
              <span><Icon name={icon} /></span>
              <span>{label}</span>
            </RailItem>
          ))}
          <IconButton aria-label="설정"><Icon name="gearBold" /></IconButton>
        </Rail>

        <Panel>
          <PanelHead>
            <PanelRow>
              <span>기호</span>
              <AiLink><Icon name="sparkle" />AI 기호</AiLink>
            </PanelRow>
            <SearchBox>
              <Icon name="search" />
              <SearchInput placeholder="기호 검색" aria-label="기호 검색" />
            </SearchBox>
            <PanelRow>
              <RowButton><Icon name="dblUp" />모두 축...</RowButton>
              <RowButton><Icon name="gear" />관리</RowButton>
            </PanelRow>
          </PanelHead>
          <PanelBody>
            <SectionToggle aria-expanded="true"><Caret />내 라이브러리</SectionToggle>
            <DropZone>내 라이브러리에 드래그 앤 드롭으로 기호를 추가하세요</DropZone>
            <SectionToggle aria-expanded="false"><Caret dir="right" />인포그래픽 차트</SectionToggle>
            <SectionToggle aria-expanded="true"><Caret />기둥형 차트</SectionToggle>
            <TileGrid>
              {minis.map((m, i) => (
                <Tile key={i} aria-label={`기둥형 차트 ${i + 1}`}><MiniChart m={m} /></Tile>
              ))}
            </TileGrid>
          </PanelBody>
          <PanelFoot><PrimaryButton>다른 기호</PrimaryButton></PanelFoot>
        </Panel>

        <Workspace>
          <Corner />
          <HorizontalRuler />
          <VerticalScroll />
          <VerticalRuler />
          <Viewport>
            <Paper>
              <SheetTitle $x={198} $y={14} $w={714}>
                {"Global Healthy Snacks Market vs US Market\n\u00a02019-2021"}
              </SheetTitle>
              <Bullet $x={98} $y={110}>Global vs US Healthy Snacks Market analysis and forecast, in terms of value.</Bullet>
              <ChartTitle $x={150} $y={170} $w={320}>Global region healthy snacks market</ChartTitle>
              <ChartTitle $x={710} $y={170} $w={200}>US snacks market</ChartTitle>
              <ChartBox $x={48} $y={196}><BarChart s={globalChart} /></ChartBox>
              <ChartBox $x={548} $y={196}><BarChart s={usChart} /></ChartBox>
              <Total $x={229} $y={598} $w={164} $h={35} $bg="#8cbeff">19 US billion $</Total>
              <Total $x={746} $y={598} $w={148} $h={35} $bg="#a0aaff">27 US billion $</Total>
              <Swatch $x={63} $y={660} $w={35} $h={33} $bg={B} />
              <Note $x={110} $y={661} $w={290}>In terms of region,Europe is estimated to hold the largest share in the global healthy snacks market.</Note>
              <Swatch $x={424} $y={662} $w={35} $h={33} $bg={R} />
              <Note $x={474} $y={661} $w={253}>The Asia Pacific is projected to generate the highest CAGR in the global healthy snacks market.</Note>
              <Swatch $x={746} $y={662} $w={35} $h={33} $bg={Y} />
              <Note $x={792} $y={661} $w={276}>South Africa is the sugar-free segment is the healthy snacks market growth.</Note>
            </Paper>
          </Viewport>
          <HorizontalScroll />
          <PaletteBar>
            <FillButton aria-label="채우기 색"><Icon name="fillSmall" /><Caret /></FillButton>
            <Swatches>
              {paletteColors.map((c, i) => <ColorChip key={i} $c={c} aria-label={c} />)}
            </Swatches>
          </PaletteBar>
          <AssistPill>
            <IconButton aria-label="AI 그리기">
              <svg width="20" height="20" viewBox="0 0 20 20" fill="none" stroke="url(#assist)" strokeWidth="1.6">
                <defs><linearGradient id="assist" x1="0" y1="0" x2="20" y2="20" gradientUnits="userSpaceOnUse"><stop stopColor="#8a4dff" /><stop offset="1" stopColor="#2f6bff" /></linearGradient></defs>
                <path d="M4.500 5.500a2 2 0 0 1 3.500-1.700l6.500 11.500a2 2 0 0 1-3.500 2zM5.800 8l3.400-2" />
                <path d="M16 4v5M13.500 6.500h5M10.500.500v3M2.500 12v4M.500 14h4" strokeWidth="1.300" />
              </svg>
            </IconButton>
            <span />
            <IconButton aria-label="AI 도우미">
              <svg width="20" height="20" viewBox="0 0 20 20">
                <path d="M8.500 3c1 5 2.500 6.500 7.500 7.500-5 1-6.500 2.500-7.500 7.500-1-5-2.500-6.500-7.500-7.500 5-1 6.500-2.500 7.500-7.500z" fill="#5a4dff" stroke="#5a4dff" strokeLinejoin="round" />
                <path d="M16 .5c.4 2 1 2.600 3 3-2 .4-2.600 1-3 3-.4-2-1-2.600-3-3 2-.4 2.600-1 3-3z" fill="#2f7bff" stroke="#2f7bff" strokeWidth=".6" />
              </svg>
            </IconButton>
          </AssistPill>
        </Workspace>

        <RightRail>
          <RightItem $h={22} aria-label="패널 펼치기"><Icon name="collapse" /></RightItem>
          <RightItem $h={44} aria-label="채우기"><Icon name="bucket" /></RightItem>
          <RightItem $h={46} aria-label="페이지 목록"><Icon name="list" /></RightItem>
          <RightItem $h={35} $active aria-label="도움말"><Icon name="helpBold" /></RightItem>
          <RightItem $h={32} aria-label="설정"><Icon name="gearBold" /></RightItem>
        </RightRail>
      </Body>

      <StatusBar>
        <StatusButton $w={50} aria-label="페이지 보기"><Icon name="pages" /></StatusButton>
        <StatusSep />
        <SelectWrap $w={125} $l={13} $r={13}>
          <PageSelect aria-label="페이지"><option>페이지-1</option></PageSelect>
          <Caret />
        </SelectWrap>
        <StatusSep />
        <StatusButton $w={40} aria-label="페이지 추가"><Icon name="plus" /></StatusButton>
        <StatusSep />
        <StatusButton $w={72} $accent>페이지-1</StatusButton>
        <StatusSep />
        <Spacer />
        <StatusSep />
        <StatusText>형태 수: 14</StatusText>
        <StatusSep />
        <StatusButton $w={46} aria-label="레이어"><Icon name="layers" /><Caret /></StatusButton>
        <StatusButton $w={60}><Icon name="focus" />집중</StatusButton>
        <StatusButton $w={38} aria-label="재생"><Icon name="play" /></StatusButton>
        <StatusSep />
        <StatusButton $w={32} aria-label="축소"><Icon name="minus" /></StatusButton>
        <ZoomSlider type="range" min={0} max={400} defaultValue={90} aria-label="확대/축소" />
        <StatusButton $w={32} aria-label="확대"><Icon name="plus" /></StatusButton>
        <SelectWrap $w={67} $l={9} $r={12}>
          <select aria-label="배율"><option>100%</option></select>
          <Caret />
        </SelectWrap>
        <StatusSep />
        <StatusButton $w={40} aria-label="미니맵"><Icon name="map" /></StatusButton>
        <StatusButton $w={40} aria-label="창에 맞추기"><Icon name="fit" /></StatusButton>
      </StatusBar>
    </Frame>
  );
}
